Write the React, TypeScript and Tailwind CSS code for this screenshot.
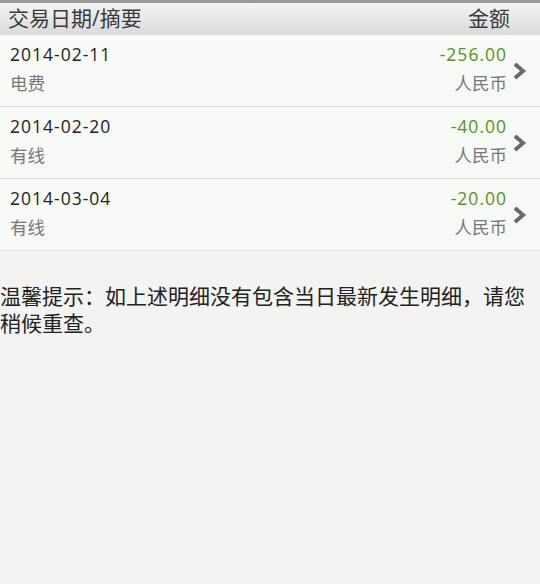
import React from "react";

const rows = [
  { date: "2014-02-11", memo: "电费", amount: "-256.00" },
  { date: "2014-02-20", memo: "有线", amount: "-40.00" },
  { date: "2014-03-04", memo: "有线", amount: "-20.00" },
];

const Chevron = () => (
  <svg width="14" height="18" viewBox="0 0 14 18" className="shrink-0">
    <path d="M3 2 L11 9 L3 16" fill="none" stroke="#6b6b6b" strokeWidth="4" strokeLinejoin="miter" />
  </svg>
);

export default function App() {
  return (
    <div
      className="w-[540px] h-[584px] overflow-hidden bg-[#f3f3f2]"
      style={{ fontFamily: '"Open Sans", "Noto Sans CJK SC", sans-serif' }}
    >
      <div className="border-t-[3px] border-[#9a9a9a] h-[35px] flex items-center justify-between pl-[8px] pr-[30px] bg-gradient-to-b from-[#f4f4f4] to-[#dadada] text-[21px] text-[#3a3a3a]">
        <span>交易日期/摘要</span>
        <span>金额</span>
      </div>
      <div className="bg-[#f7faf6]">
        {rows.map((r) => (
          <div
            key={r.date}
            className="h-[72px] flex items-center justify-between pl-[10px] pr-[14px] pb-[4px] border-b border-[#dcdcdc]"
          >
            <div className="flex flex-col gap-[5px]">
              <span className="text-[17.5px] leading-[24px] text-[#222] tracking-[1px]">{r.date}</span>
              <span className="text-[17.5px] leading-[24px] text-[#777]">{r.memo}</span>
            </div>
            <div className="flex items-center gap-[5px] pt-[4px]">
              <div className="flex flex-col items-end gap-[5px] -mt-[4px]">
                <span className="text-[17.5px] leading-[24px] text-[#559416] tracking-[1px]">{r.amount}</span>
                <span className="text-[17.5px] leading-[24px] text-[#777]">人民币</span>
              </div>
              <Chevron />
            </div>
          </div>
        ))}
      </div>
      <p className="mt-[32px] text-[21px] leading-[27px] text-[#222]">
        温馨提示：如上述明细没有包含当日最新发生明细，请您稍候重查。
      </p>
    </div>
  );
}
